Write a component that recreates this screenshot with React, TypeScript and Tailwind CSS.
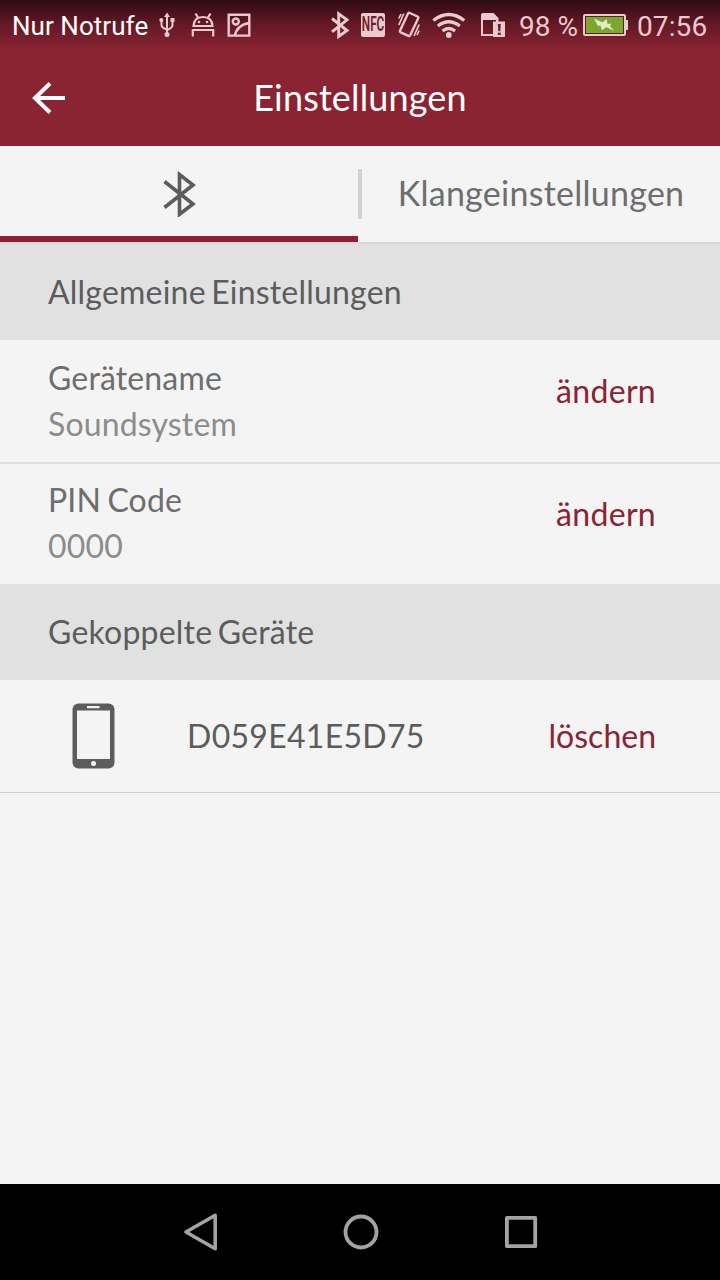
import type { ReactNode } from "react";

const tint = "#ecc9cf";

function StatusBar() {
  return (
    <div className="flex h-[50px] shrink-0 items-center bg-linear-to-b from-[#2f0b12] via-[#651926] to-[#8a2332] pl-3 font-[Roboto,sans-serif]">
      <div className="w-[147px] whitespace-nowrap pt-0.5 text-[26px] leading-[50px] tracking-[0.05px] text-white">Nur Notrufe</div>
      <svg width="16" height="26" viewBox="159 12 16 26" fill="none" stroke={tint} strokeWidth="2">
        <path d="M167 16v18M161.500 20v5q0 3 5.500 4.500M172.500 19v6q0 3-5.500 5" />
        <path d="M167 12.500l-3 4.500h6z" fill={tint} stroke="none" />
        <circle cx="167" cy="34.500" r="2.500" fill={tint} stroke="none" />
        <circle cx="161.300" cy="20" r="2" fill={tint} stroke="none" />
        <path d="M170.500 18h4v4h-4z" fill={tint} stroke="none" />
      </svg>
      <svg className="ml-4" width="24" height="26" viewBox="191 12 24 26" fill="none" stroke={tint} strokeWidth="2.200">
        <path d="M193.500 26q.5-9 9.500-9t9.500 9zM198 17.500l-2.500-4M208 17.500l2.500-4M192.800 36.500v-6.500h20.400v6.500" />
        <circle cx="199" cy="22" r="1.300" fill={tint} stroke="none" />
        <circle cx="207" cy="22" r="1.300" fill={tint} stroke="none" />
      </svg>
      <svg className="ml-3" width="24" height="26" viewBox="227 12 24 26" fill="none" stroke={tint} strokeWidth="2.400">
        <path d="M228.700 14.800h20.600v20.800h-20.600zM235 35.500q1.500-10 14-12.500" />
        <circle cx="235.800" cy="21.500" r="3" />
      </svg>
      <svg className="ml-[79px]" width="20" height="28" viewBox="330 11 20 28" fill="none" stroke={tint} strokeWidth="2.900">
        <path d="M332 18.500l15 12-8.300 6V13.800l8.300 6-15 12" />
      </svg>
      <div className="ml-[11px] flex h-6 w-6 items-center justify-center overflow-hidden rounded-[2px] bg-[#ecc9cf] text-[21px] font-semibold text-[#6e1d2a]">
        <span className="scale-x-[0.56]">NFC</span>
      </div>
      <svg className="ml-3" width="24" height="28" viewBox="397 11 24 28" fill="none" stroke={tint} strokeWidth="2">
        <path d="M408 13.500q.6-1 1.800-.5l7.700 3.500q1.200.6.700 1.800l-8 17q-.6 1.200-1.800.6l-7.700-3.500q-1.200-.6-.6-1.800z" strokeWidth="2.400" />
        <path d="M398.800 18.500l2.200-4.500M398.800 25l5-11.500M419.200 30.500l-2.200 4.500M419.200 24.500l-5.200 11.500" strokeWidth="1.700" />
      </svg>
      <svg className="ml-[11px]" width="34" height="28" viewBox="432 11 34 28" fill="none" stroke={tint} strokeWidth="3.200">
        <path d="M433.300 20.500q15.500-12 31 0M437.800 26q11-8.500 22 0M442.500 31q6.300-5 12.600 0" />
        <circle cx="448.800" cy="35" r="2.900" fill={tint} stroke="none" />
      </svg>
      <svg className="ml-[14px]" width="26" height="26" viewBox="480 12 26 26">
        <path d="M483 13h10.500l5 5v3.500H505V37h-12v-1h-12V15q0-2 2-2zm0 7v14h10V21.500h3V20z" fill={tint} fillRule="evenodd" />
        <path d="M497.800 24h3l-.5 7.300h-2zM497.800 32.700h3V35h-3z" fill="#6e1d2a" />
      </svg>
      <div className="ml-[13px] w-[64px] whitespace-nowrap pt-[3px] text-[28px] leading-[50px] text-[#ecc9cf]">98 %</div>
      <svg width="46" height="24" viewBox="583 13 46 24">
        <rect x="584" y="15" width="41" height="20" rx="1" fill="#7da62c" stroke={tint} strokeWidth="2" />
        <rect x="585.500" y="16.500" width="38" height="17" fill="none" stroke="#52251d" />
        <path d="M626 20h2v10h-2z" fill={tint} />
        <path d="M594 18.500l8.500 4 4-3.500 1 5 4-.5-1.500 2.500 4.500 5-8.500-4-4 3.500-1.500-5-2.500.5z" fill="#e5eacf" />
      </svg>
      <div className="ml-2 whitespace-nowrap pt-[3px] text-[28px] leading-[50px] tracking-[0.1px] text-[#ecc9cf]">07:56</div>
    </div>
  );
}

function Header() {
  return (
    <header className="grid h-24 shrink-0 grid-cols-[96px_1fr_96px] items-center bg-[#8a2332]">
      <button className="pl-8" aria-label="Zurück">
        <svg width="34" height="32" viewBox="32 82 34 32" fill="none" stroke="#fff" strokeWidth="4">
          <path d="M65 98H35M50 83.500L35 98l15 14.500" />
        </svg>
      </button>
      <h1 className="pb-[2px] text-center text-[36px] leading-[94px] tracking-[0.15px] text-white">Einstellungen</h1>
    </header>
  );
}

function Tabs() {
  return (
    <nav className="flex h-[98px] shrink-0 border-b-2 border-[#d8d8d8]">
      <button className="flex w-[358px] items-center justify-center border-b-[6px] border-[#8f2034] pt-[6px]" aria-label="Bluetooth">
        <svg width="34" height="46" viewBox="162 171 34 46" fill="none" stroke="#5c5c5c" strokeWidth="3.600">
          <path d="M164.500 181.500L193 204l-13.500 10.300V174.500L193 185l-28.500 22.500" />
        </svg>
      </button>
      <div className="mt-[23px] h-[50px] w-1 bg-[#d3d3d3]" />
      <button className="flex-1 pb-0.5 text-center text-[34px] leading-[92px] tracking-[0.26px] text-[#6e6e6e]">Klangeinstellungen</button>
    </nav>
  );
}

function Section({ children }: { children: ReactNode }) {
  return (
    <h2 className="h-24 shrink-0 bg-[#e1e1e1] pl-12 text-[32px] leading-[95px] tracking-[0.21px] [word-spacing:-3px] text-[#5c5c5c]">
      {children}
    </h2>
  );
}

function Setting({ label, value, className, actionClass }: { label: string; value: string; className: string; actionClass: string }) {
  return (
    <div className={`flex shrink-0 justify-between pl-12 pr-16 ${className}`}>
      <div className="text-[32px] leading-[46px] tracking-[0.15px]">
        <p className="[word-spacing:-2px] text-[#6e6e6e]">{label}</p>
        <p className="text-[#8c8c8c]">{value}</p>
      </div>
      <button className={`h-[46px] text-[32px] leading-[46px] tracking-[0.3px] text-[#8a2332] ${actionClass}`}>ändern</button>
    </div>
  );
}

function NavigationBar() {
  return (
    <footer className="flex h-24 shrink-0 items-center bg-black pl-[183px]">
      <svg width="36" height="40" viewBox="183 1212 36 40" fill="none" stroke="#a3a3a3" strokeWidth="3.600" strokeLinejoin="round">
        <path d="M215.200 1215.300v33.400L186 1232z" />
      </svg>
      <svg className="ml-[123px]" width="38" height="38" viewBox="342 1213 38 38" fill="none" stroke="#a3a3a3" strokeWidth="3.800">
        <circle cx="361" cy="1232" r="15.500" />
      </svg>
      <svg className="ml-[124px]" width="34" height="34" viewBox="504 1215 34 34" fill="none" stroke="#a3a3a3" strokeWidth="3.800" strokeLinejoin="round">
        <path d="M506.900 1217.900h28.300v28.300h-28.300z" />
      </svg>
    </footer>
  );
}

export default function App() {
  return (
    <div className="flex h-[1280px] w-[720px] flex-col overflow-hidden bg-[#f4f4f4] font-[Lato,sans-serif]">
      <StatusBar />
      <Header />
      <Tabs />
      <Section>Allgemeine Einstellungen</Section>
      <Setting label="Gerätename" value="Soundsystem" className="h-[124px] border-b-2 border-[#dedede] pt-[15px]" actionClass="mt-[13px]" />
      <Setting label="PIN Code" value="0000" className="h-[120px] pt-[13px]" actionClass="mt-[14px]" />
      <Section>Gekoppelte Geräte</Section>
      <div className="flex h-[113px] shrink-0 items-center border-b border-[#cfcfcf] pl-[72px] pr-16 text-[32px] leading-[112px]">
        <svg width="43" height="66" viewBox="72 703 43 66">
          <rect x="72.500" y="703.500" width="42" height="65" rx="6" fill="#5c5c5c" />
          <path d="M77 710.500h33V759H77zM87 706h12.500v2.300H87z" fill="#f4f4f4" />
          <circle cx="93.500" cy="763.500" r="2.500" fill="#f4f4f4" />
        </svg>
        <span className="ml-[72px] flex-1 tracking-[0.3px] text-[#5c5c5c]">D059E41E5D75</span>
        <button className="text-[#8a2332]">löschen</button>
      </div>
      <main className="flex-1" />
      <NavigationBar />
    </div>
  );
}
